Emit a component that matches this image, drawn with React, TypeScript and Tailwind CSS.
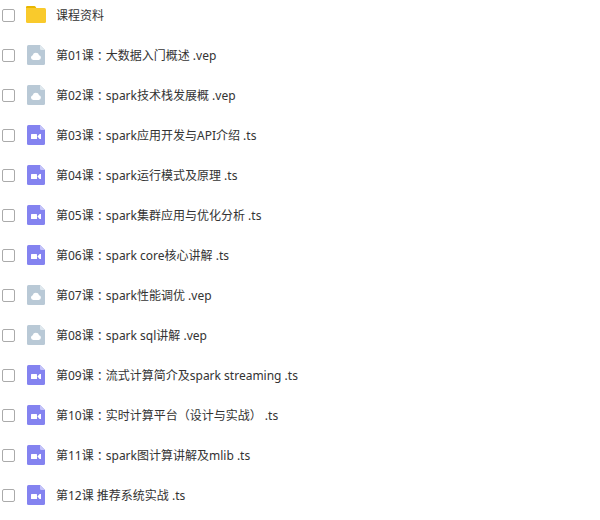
import { Fragment } from "react";

type FileKind = "folder" | "cloud" | "video";

const FILES: { name: string; kind: FileKind }[] = [
    { name: "课程资料", kind: "folder" },
    { name: "第01课：大数据入门概述 .vep", kind: "cloud" },
    { name: "第02课：spark技术栈发展概 .vep", kind: "cloud" },
    { name: "第03课：spark应用开发与API介绍 .ts", kind: "video" },
    { name: "第04课：spark运行模式及原理 .ts", kind: "video" },
    { name: "第05课：spark集群应用与优化分析 .ts", kind: "video" },
    { name: "第06课：spark core核心讲解 .ts", kind: "video" },
    { name: "第07课：spark性能调优 .vep", kind: "cloud" },
    { name: "第08课：spark sql讲解 .vep", kind: "cloud" },
    { name: "第09课：流式计算简介及spark streaming .ts", kind: "video" },
    { name: "第10课：实时计算平台（设计与实战） .ts", kind: "video" },
    { name: "第11课：spark图计算讲解及mlib .ts", kind: "video" },
    { name: "第12课 推荐系统实战 .ts", kind: "video" },
];

function FileIcon({ kind }: { kind: FileKind }) {
    if (kind === "folder") {
        return (
            <svg width="20" height="20" viewBox="0 0 20 20" className="shrink-0" aria-hidden="true">
                <path d="M0 2.2Q0 1 1.2 1H8.4Q9.2 1 9.6 1.7L10.5 3.2V6H0Z" fill="#e8b600" />
                <path d="M0 3H18.5Q20 3 20 4.5V16.5Q20 18 18.5 18H1.5Q0 18 0 16.5Z" fill="#f9ca2c" />
            </svg>
        );
    }
    const video = kind === "video";
    return (
        <svg width="20" height="20" viewBox="0 0 20 20" className="shrink-0" aria-hidden="true">
            <path
                d="M2.5 0H14L19 5V18.5Q19 20 17.5 20H2.5Q1 20 1 18.5V1.5Q1 0 2.5 0Z"
                fill={video ? "#8483f0" : "#b9c9d6"}
            />
            <path d="M14 0L19 5H15.2Q14 5 14 3.8Z" fill={video ? "#c4c3fa" : "#dfe8ee"} />
            {video ? (
                <>
                    <rect x="5" y="9" width="6" height="5" rx="0.5" fill="#fff" />
                    <path d="M11.4 11.5L13.6 9H15V14H13.6Z" fill="#fff" />
                </>
            ) : (
                <path
                    d="M7.2 15A2.4 2.4 0 0 1 6.7 10.3A3.3 3.3 0 0 1 13.1 10.3A2.4 2.4 0 0 1 12.8 15Z"
                    fill="#fff"
                />
            )}
        </svg>
    );
}

// The colon takes its half-width form, with even padding on both sides
function FileName({ name }: { name: string }) {
    return name.split("：").map((part, i) => (
        <Fragment key={i}>
            {i > 0 && <span className="px-[3px] [font-feature-settings:'halt']">：</span>}
            {part}
        </Fragment>
    ));
}

export default function App() {
    return (
        <main
            lang="zh-CN"
            className="bg-white font-['Noto_Sans','Noto_Sans_CJK_SC',sans-serif] text-xs text-[#333]"
        >
            <ul className="flex flex-col gap-4 pt-[3px] pl-[2px]">
                {FILES.map((file) => (
                    <li key={file.name}>
                        <label className="flex h-6 items-center">
                            <input
                                type="checkbox"
                                className="size-[13px] shrink-0 appearance-none rounded-[2px] border border-[#aaa] bg-white checked:bg-[#8483f0]"
                            />
                            <span className="ml-[11px]">
                                <FileIcon kind={file.kind} />
                            </span>
                            <span className="ml-[10px] pt-[2px] leading-6 whitespace-nowrap">
                                <FileName name={file.name} />
                            </span>
                        </label>
                    </li>
                ))}
            </ul>
        </main>
    );
}
